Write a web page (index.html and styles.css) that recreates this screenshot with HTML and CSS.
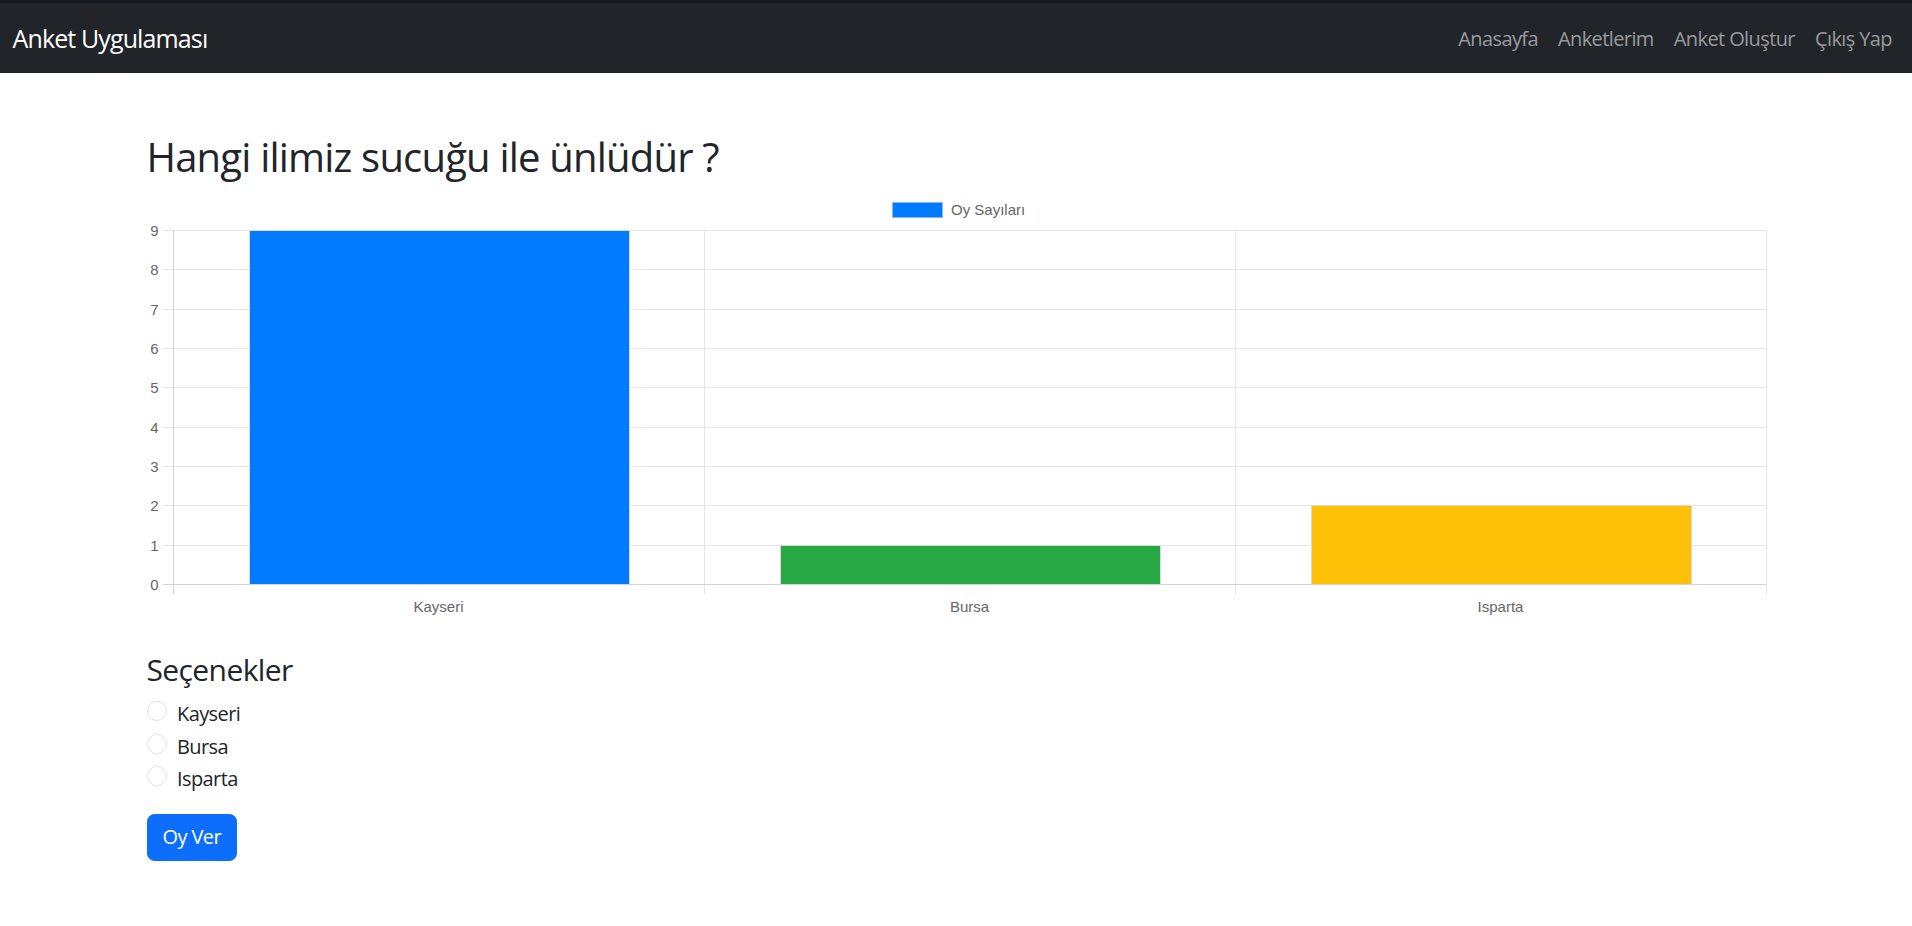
FILE: index.html
```html
<!DOCTYPE html>
<html lang="tr">
<head>
<meta charset="utf-8">
<title>Anket Uygulaması</title>
<link rel="stylesheet" href="styles.css">
</head>
<body>
<nav class="navbar">
  <a class="brand" href="#">Anket Uygulaması</a>
  <ul class="nav">
    <li><a class="nav-link" href="#">Anasayfa</a></li>
    <li><a class="nav-link" href="#">Anketlerim</a></li>
    <li><a class="nav-link" href="#">Anket Oluştur</a></li>
    <li><a class="nav-link" href="#">Çıkış Yap</a></li>
  </ul>
</nav>
<main class="container">
  <h2 class="title">Hangi ilimiz sucuğu ile ünlüdür ?</h2>
  <svg class="chart" width="1620" height="440" viewBox="0 0 1620 440" xmlns="http://www.w3.org/2000/svg">
    <g class="legend">
      <rect x="745.5" y="13.5" width="50" height="15" fill="#007bff" stroke="#8ab8f0" stroke-width="1"/>
      <text x="804" y="25.7">Oy Sayıları</text>
    </g>
    <g class="grid" stroke="#e6e6e6" stroke-width="1" shape-rendering="crispEdges">
      <line x1="16" y1="41.5" x2="1620" y2="41.5"/>
      <line x1="16" y1="80.5" x2="1620" y2="80.5"/>
      <line x1="16" y1="120.5" x2="1620" y2="120.5"/>
      <line x1="16" y1="159.5" x2="1620" y2="159.5"/>
      <line x1="16" y1="198.5" x2="1620" y2="198.5"/>
      <line x1="16" y1="238.5" x2="1620" y2="238.5"/>
      <line x1="16" y1="277.5" x2="1620" y2="277.5"/>
      <line x1="16" y1="316.5" x2="1620" y2="316.5"/>
      <line x1="16" y1="356.5" x2="1620" y2="356.5"/>
      <line x1="557.5" y1="41" x2="557.5" y2="405"/>
      <line x1="1088.5" y1="41" x2="1088.5" y2="405"/>
      <line x1="1619.5" y1="41" x2="1619.5" y2="405"/>
    </g>
    <g class="bars" stroke="#d9d9d9" stroke-width="1" shape-rendering="crispEdges">
      <rect x="102.5" y="41.5" width="380" height="354" fill="#007bff"/>
      <rect x="633.5" y="356.5" width="380" height="39" fill="#28a745"/>
      <rect x="1164.5" y="316.5" width="380" height="79" fill="#ffc107"/>
    </g>
    <g class="axes" stroke="#d3d3d3" stroke-width="1" shape-rendering="crispEdges">
      <line x1="16" y1="395.5" x2="1620" y2="395.5"/>
      <line x1="26.5" y1="41" x2="26.5" y2="405"/>
    </g>
    <g class="ylabels" text-anchor="end">
      <text x="11.5" y="46.5">9</text>
      <text x="11.5" y="86">8</text>
      <text x="11.5" y="125.5">7</text>
      <text x="11.5" y="165">6</text>
      <text x="11.5" y="204">5</text>
      <text x="11.5" y="243.5">4</text>
      <text x="11.5" y="283">3</text>
      <text x="11.5" y="322">2</text>
      <text x="11.5" y="361.5">1</text>
      <text x="11.5" y="401">0</text>
    </g>
    <g class="xlabels" text-anchor="middle">
      <text x="291.5" y="422.7">Kayseri</text>
      <text x="822.5" y="422.7">Bursa</text>
      <text x="1353.5" y="422.7">Isparta</text>
    </g>
  </svg>
  <h4 class="subtitle">Seçenekler</h4>
  <form class="options">
    <label class="form-check"><input class="radio" type="radio" name="secenek" value="Kayseri"><span>Kayseri</span></label>
    <label class="form-check"><input class="radio" type="radio" name="secenek" value="Bursa"><span>Bursa</span></label>
    <label class="form-check"><input class="radio" type="radio" name="secenek" value="Isparta"><span>Isparta</span></label>
    <button type="button" class="btn">Oy Ver</button>
  </form>
</main>
</body>
</html>
```
FILE: styles.css
```css
* { box-sizing: border-box; }
html, body { margin: 0; padding: 0; }
body {
  font-family: "Open Sans", "Noto Sans", sans-serif;
  font-size: 20px;
  line-height: 1.5;
  color: #212529;
  background: #fff;
  letter-spacing: -0.03em;
}
a { text-decoration: none; }

.navbar {
  display: flex;
  align-items: center;
  justify-content: space-between;
  height: 73px;
  background: #212529;
  border-top: 3px solid #17181b;
  padding: 0 10px 0 12.5px;
}
.brand {
  color: #fff;
  font-size: 25px;
  line-height: 37.5px;
  padding-top: 2px;
  letter-spacing: -0.035em;
}
.nav {
  display: flex;
  list-style: none;
  margin: 0;
  padding: 0;
}
.nav-link {
  display: block;
  padding: 10px 10px 9px;
  color: rgba(255, 255, 255, 0.55);
  line-height: 30px;
}

.container {
  width: 1651px;
  margin: 0 auto;
  padding: 60px 15px 40px 16px;
}
.title {
  font-size: 40px;
  font-weight: 500;
  line-height: 48px;
  margin: 0 0 8px;
  letter-spacing: -0.02em;
}
.chart {
  display: block;
}
.chart text {
  font-family: "Liberation Sans", Arial, sans-serif;
  font-size: 15px;
  fill: #666;
  letter-spacing: 0;
}
.subtitle {
  font-size: 30px;
  font-weight: 500;
  line-height: 36px;
  margin: 23px 0 10px;
}
.options {
  display: flex;
  flex-direction: column;
  align-items: flex-start;
}
.form-check {
  display: flex;
  align-items: flex-start;
  min-height: 31px;
  padding-top: 1px;
  margin-bottom: 1.5px;
}
.radio {
  appearance: none;
  -webkit-appearance: none;
  width: 20px;
  height: 20px;
  margin: 2px 10.5px 0 0;
  border: 1px solid #dee2e6;
  border-radius: 50%;
  background: #fff;
  flex: none;
}
.btn {
  margin-top: 18px;
  font-family: inherit;
  font-size: 20px;
  line-height: 30px;
  letter-spacing: -0.03em;
  padding: 7.5px 15px;
  color: #fff;
  background: #0d6efd;
  border: 1px solid #0d6efd;
  border-radius: 7.5px;
}
```
